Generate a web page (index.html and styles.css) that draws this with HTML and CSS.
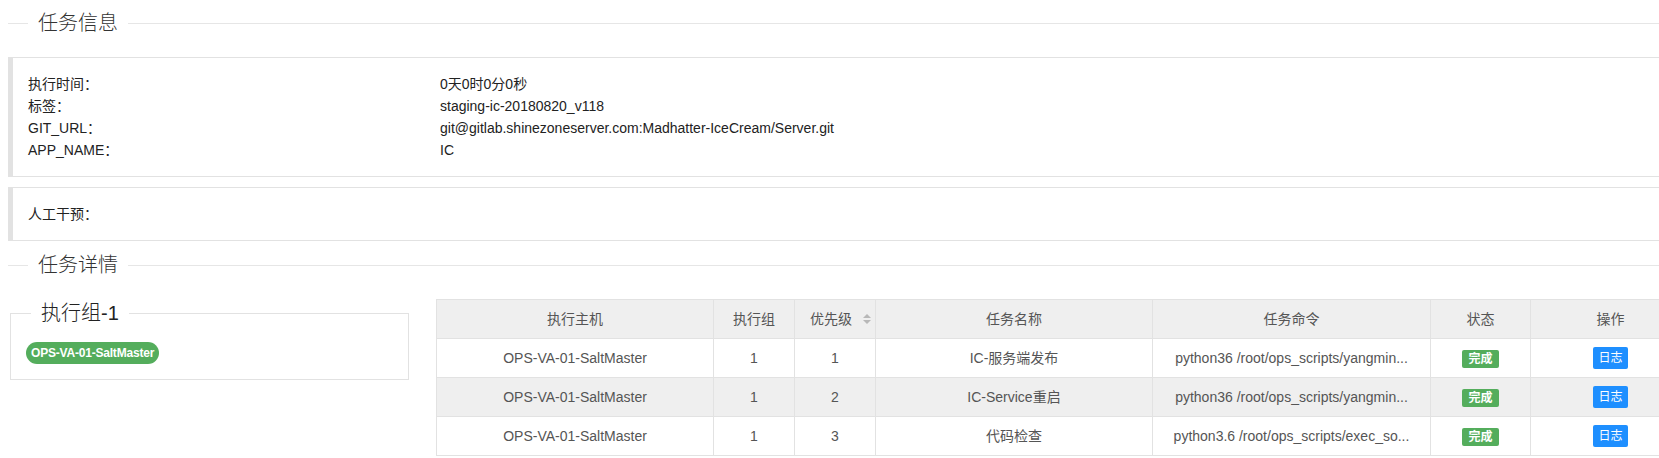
FILE: index.html
```html
<!DOCTYPE html>
<html lang="zh-CN">
<head>
<meta charset="utf-8">
<title>任务详情</title>
<link rel="stylesheet" href="styles.css">
</head>
<body>
<div class="page">
  <div class="section-title"><span>任务信息</span></div>

  <div class="quote quote-info">
    <div class="info-grid">
      <div class="k">执行时间：</div><div class="v">0天0时0分0秒</div>
      <div class="k">标签：</div><div class="v">staging-ic-20180820_v118</div>
      <div class="k">GIT_URL：</div><div class="v">git@gitlab.shinezoneserver.com:Madhatter-IceCream/Server.git</div>
      <div class="k">APP_NAME：</div><div class="v">IC</div>
    </div>
  </div>

  <div class="quote quote-manual">
    <div class="k">人工干预：</div>
  </div>

  <div class="section-title section-title-2"><span>任务详情</span></div>

  <div class="detail">
    <fieldset class="group">
      <legend>执行组-1</legend>
      <div class="group-body">
        <span class="host-pill">OPS-VA-01-SaltMaster</span>
      </div>
    </fieldset>

    <table class="tasks">
      <colgroup>
        <col class="c-host">
        <col class="c-grp">
        <col class="c-pri">
        <col class="c-name">
        <col class="c-cmd">
        <col class="c-state">
        <col class="c-op">
      </colgroup>
      <thead>
        <tr>
          <th>执行主机</th>
          <th>执行组</th>
          <th class="sortable">优先级<svg class="sort-icon" width="10" height="12" viewBox="0 0 10 12"><polygon points="1,5 5,1 9,5" /><polygon points="1,7 5,11 9,7" /></svg></th>
          <th>任务名称</th>
          <th>任务命令</th>
          <th>状态</th>
          <th>操作</th>
        </tr>
      </thead>
      <tbody>
        <tr>
          <td>OPS-VA-01-SaltMaster</td>
          <td>1</td>
          <td>1</td>
          <td>IC-服务端发布</td>
          <td class="cmd">python36 /root/ops_scripts/yangmin...</td>
          <td><span class="state-done">完成</span></td>
          <td><span class="btn-log">日志</span></td>
        </tr>
        <tr class="alt">
          <td>OPS-VA-01-SaltMaster</td>
          <td>1</td>
          <td>2</td>
          <td>IC-Service重启</td>
          <td class="cmd">python36 /root/ops_scripts/yangmin...</td>
          <td><span class="state-done">完成</span></td>
          <td><span class="btn-log">日志</span></td>
        </tr>
        <tr>
          <td>OPS-VA-01-SaltMaster</td>
          <td>1</td>
          <td>3</td>
          <td>代码检查</td>
          <td class="cmd">python3.6 /root/ops_scripts/exec_so...</td>
          <td><span class="state-done">完成</span></td>
          <td><span class="btn-log">日志</span></td>
        </tr>
      </tbody>
    </table>
  </div>
</div>
</body>
</html>
```

FILE: styles.css
```css
html, body {
  margin: 0;
  padding: 0;
  overflow: hidden;
  background: #fff;
}

body {
  font-family: "Liberation Sans", "Noto Sans CJK SC", sans-serif;
  font-size: 14px;
  color: #333;
}

.page {
  width: 1682px;
  padding: 8px 0 0 8px;
}

/* section divider titles */
.section-title {
  display: flex;
  align-items: center;
  height: 30px;
  font-size: 20px;
  font-weight: 300;
  color: #333;
}

.section-title::before {
  content: "";
  width: 20px;
  border-top: 1px solid #e6e6e6;
}

.section-title::after {
  content: "";
  flex: 1;
  border-top: 1px solid #e6e6e6;
}

.section-title span {
  padding: 0 10px;
  line-height: 30px;
}

.section-title-2 {
  margin-top: 9px;
}

/* quote panels */
.quote {
  border: 1px solid #e2e2e2;
  border-left: 5px solid #e2e2e2;
  padding: 15px;
  line-height: 22px;
  color: #222;
}

.quote-info {
  margin-top: 19px;
}

.quote-manual {
  margin-top: 10px;
}

.info-grid {
  display: grid;
  grid-template-columns: 412px 1fr;
}

/* detail area */
.detail {
  display: flex;
  align-items: flex-start;
  margin-top: 19px;
}

.group {
  box-sizing: border-box;
  width: 399px;
  min-width: 0;
  margin: 0 0 0 2px;
  padding: 0;
  border: 1px solid #e2e2e2;
  flex: none;
}

.group legend {
  margin-left: 20px;
  padding: 0 10px;
  font-size: 20px;
  font-weight: 300;
  line-height: 29px;
  color: #222;
}

.group-body {
  padding: 14px 15px 15px;
  line-height: 22px;
}

.host-pill {
  display: inline-block;
  height: 22px;
  padding: 0 5px;
  border-radius: 11px;
  background: #54ad5c;
  color: #fff;
  font-size: 12px;
  font-weight: bold;
  letter-spacing: -0.2px;
  line-height: 22px;
  vertical-align: top;
}

/* table */
.tasks {
  flex: none;
  margin-left: 27px;
  width: 1255px;
  table-layout: fixed;
  border-collapse: collapse;
  border: 1px solid #e2e2e2;
  font-size: 14px;
  color: #555;
}

.c-host { width: 277px; }
.c-grp { width: 81px; }
.c-pri { width: 81px; }
.c-name { width: 277px; }
.c-cmd { width: 278px; }
.c-state { width: 100px; }
.c-op { width: 160px; }

.tasks th,
.tasks td {
  box-sizing: border-box;
  height: 39px;
  border: 1px solid #e2e2e2;
  padding: 0 15px;
  line-height: 18px;
  text-align: center;
  vertical-align: middle;
  white-space: nowrap;
  overflow: hidden;
  text-overflow: ellipsis;
}

.tasks th {
  font-weight: normal;
  background: #efefef;
}

.tasks th.sortable {
  padding: 0 3px 0 15px;
}

.sort-icon {
  display: inline-block;
  vertical-align: -1px;
  margin-left: 10px;
  fill: #b8b8b8;
}

.tasks tr.alt td {
  background: #efefef;
}

.state-done {
  display: inline-block;
  padding: 3px 6px;
  border-radius: 2px;
  background: #54ad5c;
  color: #fff;
  font-size: 12px;
  font-weight: bold;
  line-height: 12px;
  vertical-align: middle;
}

.btn-log {
  display: inline-block;
  height: 22px;
  padding: 0 5px;
  border-radius: 2px;
  background: #1e8fff;
  color: #fff;
  font-size: 12px;
  line-height: 22px;
  vertical-align: middle;
}
```
